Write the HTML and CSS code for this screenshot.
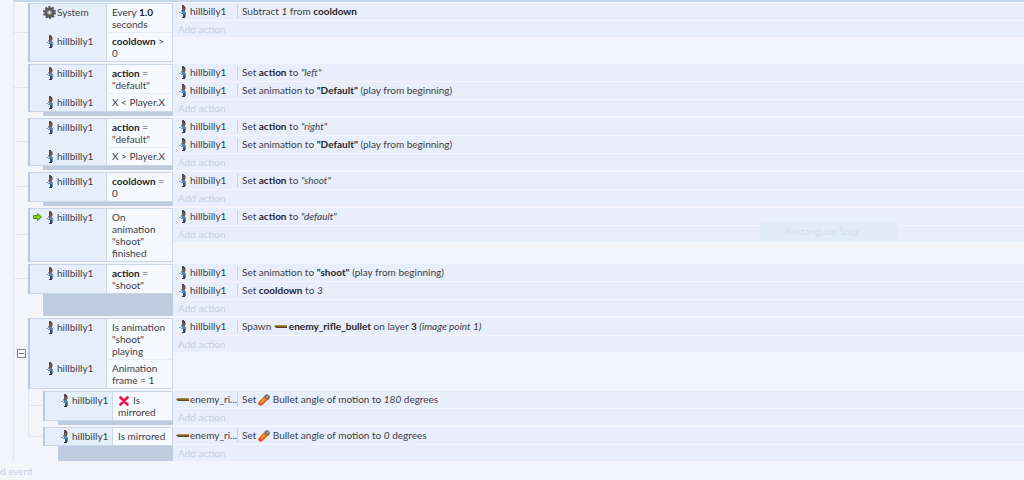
FILE: index.html
```html
<!DOCTYPE html>
<html lang="en">

<head>
  <meta charset="UTF-8" />
  <meta name="viewport" content="width=device-width, initial-scale=1.0" />
  <title>Event sheet</title>
  <link rel="stylesheet" href="styles.css">
</head>

<body>
  <svg class="sprites" aria-hidden="true">
    <symbol id="man" viewBox="0 0 10 13">
      <path d="M4 0h2v1h1v2H4z" fill="#5a4a42" />
      <path d="M4 3h3v4H4z" fill="#665d54" />
      <path d="M7 2h1v3H7z" fill="#c09c7c" />
      <path d="M3 5h1v2H3zM1 7h2v1H1z" fill="#9a9fa8" />
      <path d="M4 6h3v3H4z" fill="#5486ae" />
      <path d="M5 9h2v3H5z" fill="#2d527a" />
      <path d="M7 7h1v5H7z" fill="#6b8db0" />
      <path d="M3 8h1v1H3z" fill="#8a9ab0" />
      <path d="M4 12h3v1H4z" fill="#3c3632" />
    </symbol>
    <symbol id="gear" viewBox="0 0 13 13">
      <circle cx="6.5" cy="6.5" r="5.5" fill="none" stroke="#5c5c5c" stroke-width="2" stroke-dasharray="2 1.45" />
      <circle cx="6.5" cy="6.5" r="3.8" fill="#9a9a9a" stroke="#5a5a5a" stroke-width="2.8" />
      <circle cx="6.5" cy="6.5" r="1.6" fill="#e4e8ee" stroke="#888" stroke-width=".6" />
    </symbol>
    <symbol id="arrow" viewBox="0 0 9 8">
      <path d="M.5 2.5h4V.6L8.5 4 4.5 7.4V5.5h-4z" fill="#8ccb12" stroke="#4c9410" stroke-width="1" />
    </symbol>
    <symbol id="shell" viewBox="0 0 13 5">
      <path d="M0 2.5 2 1h11v3H2z" fill="#80602c" />
      <path d="M2 1h11v1H2z" fill="#b08a4c" />
      <path d="M2 3h11v1H3z" fill="#5a4424" />
    </symbol>
    <symbol id="bullet" viewBox="0 0 12 12">
      <path d="M7 1 9.5 0 12 2.5 11 5.5 9 6 6 3z" fill="#6e6a68" />
      <path d="M8 2 9.5 1 11 3 9 4z" fill="#a8a6a4" />
      <path d="M6 2.5 9.5 6 4.5 11 1 7.5z" fill="#e0661a" />
      <path d="M6 4 7.5 5.5 4 9 2.5 7.5z" fill="#ff9a22" />
      <path d="M1 7.5 4.5 11 2.5 12 0 10z" fill="#e04436" />
    </symbol>
    <symbol id="cross" viewBox="0 0 10 10">
      <path d="M1.5 1.5 8.5 8.5M8.5 1.5 1.5 8.5" stroke="#ee1248" stroke-width="2.6" stroke-linecap="round" />
    </symbol>
  </svg>

  <main>
    <div class="sheet">
      <section class="event">
        <div class="left">
          <div class="conditions">
            <div class="condition">
              <div class="object"><svg class="gear"><use href="#gear" /></svg>System</div>
              <div class="text">Every <b>1.0</b><br>seconds</div>
            </div>
            <div class="condition">
              <div class="object"><svg class="man"><use href="#man" /></svg>hillbilly1</div>
              <div class="text"><b>cooldown</b> &gt;<br>0</div>
            </div>
          </div>
          <div class="filler"></div>
        </div>
        <div class="actions">
          <div class="action">
            <div class="object"><svg class="man"><use href="#man" /></svg>hillbilly1</div>
            <div class="text">Subtract <i>1</i> from <b>cooldown</b></div>
          </div>
          <a class="add_action" href="#">Add action</a>
        </div>
      </section>

      <section class="event">
        <div class="left">
          <div class="conditions">
            <div class="condition">
              <div class="object"><svg class="man"><use href="#man" /></svg>hillbilly1</div>
              <div class="text"><b>action</b> =<br>"default"</div>
            </div>
            <div class="condition">
              <div class="object"><svg class="man"><use href="#man" /></svg>hillbilly1</div>
              <div class="text">X &lt; Player.X</div>
            </div>
          </div>
          <div class="filler"></div>
        </div>
        <div class="actions">
          <div class="action">
            <div class="object"><svg class="man"><use href="#man" /></svg>hillbilly1</div>
            <div class="text">Set <b>action</b> to <i>"left"</i></div>
          </div>
          <div class="action">
            <div class="object"><svg class="man"><use href="#man" /></svg>hillbilly1</div>
            <div class="text">Set animation to <b>"Default"</b> (play from beginning)</div>
          </div>
          <a class="add_action" href="#">Add action</a>
        </div>
      </section>

      <section class="event">
        <div class="left">
          <div class="conditions">
            <div class="condition">
              <div class="object"><svg class="man"><use href="#man" /></svg>hillbilly1</div>
              <div class="text"><b>action</b> =<br>"default"</div>
            </div>
            <div class="condition">
              <div class="object"><svg class="man"><use href="#man" /></svg>hillbilly1</div>
              <div class="text">X &gt; Player.X</div>
            </div>
          </div>
          <div class="filler"></div>
        </div>
        <div class="actions">
          <div class="action">
            <div class="object"><svg class="man"><use href="#man" /></svg>hillbilly1</div>
            <div class="text">Set <b>action</b> to <i>"right"</i></div>
          </div>
          <div class="action">
            <div class="object"><svg class="man"><use href="#man" /></svg>hillbilly1</div>
            <div class="text">Set animation to <b>"Default"</b> (play from beginning)</div>
          </div>
          <a class="add_action" href="#">Add action</a>
        </div>
      </section>

      <section class="event">
        <div class="left">
          <div class="conditions">
            <div class="condition">
              <div class="object"><svg class="man"><use href="#man" /></svg>hillbilly1</div>
              <div class="text"><b>cooldown</b> =<br>0</div>
            </div>
          </div>
          <div class="filler"></div>
        </div>
        <div class="actions">
          <div class="action">
            <div class="object"><svg class="man"><use href="#man" /></svg>hillbilly1</div>
            <div class="text">Set <b>action</b> to <i>"shoot"</i></div>
          </div>
          <a class="add_action" href="#">Add action</a>
        </div>
      </section>

      <section class="event">
        <div class="left">
          <div class="conditions">
            <div class="condition">
              <div class="object trigger"><svg class="arrow"><use href="#arrow" /></svg><svg class="man"><use href="#man" /></svg>hillbilly1</div>
              <div class="text">On<br>animation<br>"shoot"<br>finished</div>
            </div>
          </div>
          <div class="filler"></div>
        </div>
        <div class="actions">
          <div class="action">
            <div class="object"><svg class="man"><use href="#man" /></svg>hillbilly1</div>
            <div class="text">Set <b>action</b> to <i>"default"</i></div>
          </div>
          <a class="add_action" href="#">Add action</a>
        </div>
      </section>

      <section class="event">
        <div class="left">
          <div class="conditions">
            <div class="condition">
              <div class="object"><svg class="man"><use href="#man" /></svg>hillbilly1</div>
              <div class="text"><b>action</b> =<br>"shoot"</div>
            </div>
          </div>
          <div class="filler"></div>
        </div>
        <div class="actions">
          <div class="action">
            <div class="object"><svg class="man"><use href="#man" /></svg>hillbilly1</div>
            <div class="text">Set animation to <b>"shoot"</b> (play from beginning)</div>
          </div>
          <div class="action">
            <div class="object"><svg class="man"><use href="#man" /></svg>hillbilly1</div>
            <div class="text">Set <b>cooldown</b> to <i>3</i></div>
          </div>
          <a class="add_action" href="#">Add action</a>
        </div>
      </section>

      <section class="event">
        <div class="left">
          <div class="conditions">
            <button class="toggle" type="button" aria-label="Collapse"></button>
            <div class="condition">
              <div class="object"><svg class="man"><use href="#man" /></svg>hillbilly1</div>
              <div class="text">Is animation<br>"shoot"<br>playing</div>
            </div>
            <div class="condition">
              <div class="object"><svg class="man"><use href="#man" /></svg>hillbilly1</div>
              <div class="text">Animation<br>frame = 1</div>
            </div>
          </div>
          <div class="filler"></div>
        </div>
        <div class="actions">
          <div class="action">
            <div class="object"><svg class="man"><use href="#man" /></svg>hillbilly1</div>
            <div class="text">Spawn <svg class="shell inline"><use href="#shell" /></svg><b>enemy_rifle_bullet</b> on layer <b>3</b> <i>(image point 1)</i></div>
          </div>
          <a class="add_action" href="#">Add action</a>
        </div>
      </section>

      <div class="children">
        <section class="event">
          <div class="left">
            <div class="conditions">
              <div class="condition">
                <div class="object"><svg class="man"><use href="#man" /></svg>hillbilly1</div>
                <div class="text"><svg class="cross"><use href="#cross" /></svg>Is<br>mirrored</div>
              </div>
            </div>
            <div class="filler"></div>
          </div>
          <div class="actions">
            <div class="action">
              <div class="object"><svg class="shell"><use href="#shell" /></svg>enemy_ri...</div>
              <div class="text">Set <svg class="bullet"><use href="#bullet" /></svg>Bullet angle of motion to <i>180</i> degrees</div>
            </div>
            <a class="add_action" href="#">Add action</a>
          </div>
        </section>

        <section class="event">
          <div class="left">
            <div class="conditions">
              <div class="condition">
                <div class="object"><svg class="man"><use href="#man" /></svg>hillbilly1</div>
                <div class="text">Is mirrored</div>
              </div>
            </div>
            <div class="filler"></div>
          </div>
          <div class="actions">
            <div class="action">
              <div class="object"><svg class="shell"><use href="#shell" /></svg>enemy_ri...</div>
              <div class="text">Set <svg class="bullet"><use href="#bullet" /></svg>Bullet angle of motion to <i>0</i> degrees</div>
            </div>
            <a class="add_action" href="#">Add action</a>
          </div>
        </section>
      </div>
    </div>

    <div class="footer"><a href="#">d event</a></div>
    <div class="snip">Rectangular Snip</div>
  </main>
</body>

</html>
```
FILE: styles.css
```css
* {
  box-sizing: border-box;
}

body {
  margin: 0;
  background-color: #f4f5fb;
  color: #3e3e44;
  font-family: Lato, "Open Sans", sans-serif;
  font-size: 10px;
  line-height: 12px;
}

a {
  color: #c5d0e5;
  text-decoration: none;
}

svg {
  display: block;
  flex-shrink: 0;
}

b {
  color: #26262a;
}

.sprites {
  display: none;
}

.sheet {
  display: flex;
  flex-direction: column;
  gap: 2px;
  margin-left: 13px;
  padding: 1px 0 0 14px;
  border-left: 1px solid #e3e6f2;
  border-top: 2px solid #c5d7ec;
}

.event {
  display: flex;
}

.left {
  display: flex;
  flex-direction: column;
  flex-shrink: 0;
  width: 145px;
}

.conditions {
  position: relative;
  display: flex;
  flex-direction: column;
  gap: 1px;
  border: 1px solid #c9d6ea;
  border-left: 2px solid #b9c9e0;
  background-color: #e5eefa;
}

/* branch of the tree, from the trunk to the block */
.conditions::before {
  content: "";
  position: absolute;
  top: calc(50% - 1px);
  left: -16px;
  width: 14px;
  height: 1px;
  background-color: #e3e6f2;
}

.filler {
  flex: 1;
  margin-left: 15px;
  background-color: #bfcce0;
}

.condition {
  display: flex;
}

.object {
  display: flex;
  flex-shrink: 0;
  align-items: flex-start;
  white-space: nowrap;
}

.condition .object {
  width: 76px;
  padding: 2px 0 2px 15px;
}

.condition .trigger {
  padding-left: 3px;
}

.condition .text {
  flex: 1;
  padding: 2px 0 2px 5px;
  border-left: 1px solid #cbd8ea;
  background-color: #f6f9ff;
  white-space: nowrap;
}

.man {
  width: 10px;
  height: 13px;
  margin-right: 2px;
}

.gear {
  width: 13px;
  height: 13px;
  margin: 0 1px 0 -2px;
}

.arrow {
  width: 9px;
  height: 8px;
  margin: 2px 3px 0 0;
}

.shell {
  width: 13px;
  height: 5px;
  margin: 4px 1px 0 0;
}

.inline,
.bullet,
.cross {
  display: inline-block;
}

.inline {
  margin: 0 2px 0 0;
  vertical-align: 1px;
}

.bullet {
  width: 12px;
  height: 12px;
  margin: 0 3px 0 -1px;
  vertical-align: -3px;
}

.cross {
  width: 10px;
  height: 10px;
  margin: 0 4px 0 1px;
  vertical-align: -2px;
}

.actions {
  display: flex;
  flex: 1;
  flex-direction: column;
  align-self: flex-start;
  gap: 1px;
  min-width: 0;
}

.action {
  display: flex;
  height: 17px;
  padding: 2px 0;
  background-color: #e8eefb;
}

.action .object {
  width: 64px;
  padding-left: 5px;
}

.action .object .shell {
  margin-left: -2px;
}

.action .text {
  padding-left: 4px;
  border-left: 1px solid #c5d4ea;
  white-space: nowrap;
}

.add_action {
  height: 16px;
  padding: 2px 5px;
  background-color: #e8eefb;
}

.toggle {
  position: absolute;
  top: calc(50% - 5px);
  left: -13px;
  z-index: 1;
  width: 9px;
  height: 9px;
  padding: 0;
  border: 1px solid #8a8a8e;
  background: linear-gradient(#77777c, #77777c) center / 5px 1px no-repeat #f7f8fc;
}

.children {
  position: relative;
  display: flex;
  flex-direction: column;
  gap: 2px;
  padding-left: 15px;
}

.children::before {
  content: "";
  position: absolute;
  top: -2px;
  bottom: 25px;
  left: 0;
  width: 1px;
  background-color: #e3e6f2;
}

.children .left {
  width: 130px;
}

.children .condition .object {
  width: 67px;
}

.footer {
  padding-top: 4px;
}

.snip {
  position: absolute;
  top: 222px;
  left: 760px;
  width: 137px;
  padding: 3px 25px;
  background-color: #e1ebfa;
  color: #d3dcec;
}
```
